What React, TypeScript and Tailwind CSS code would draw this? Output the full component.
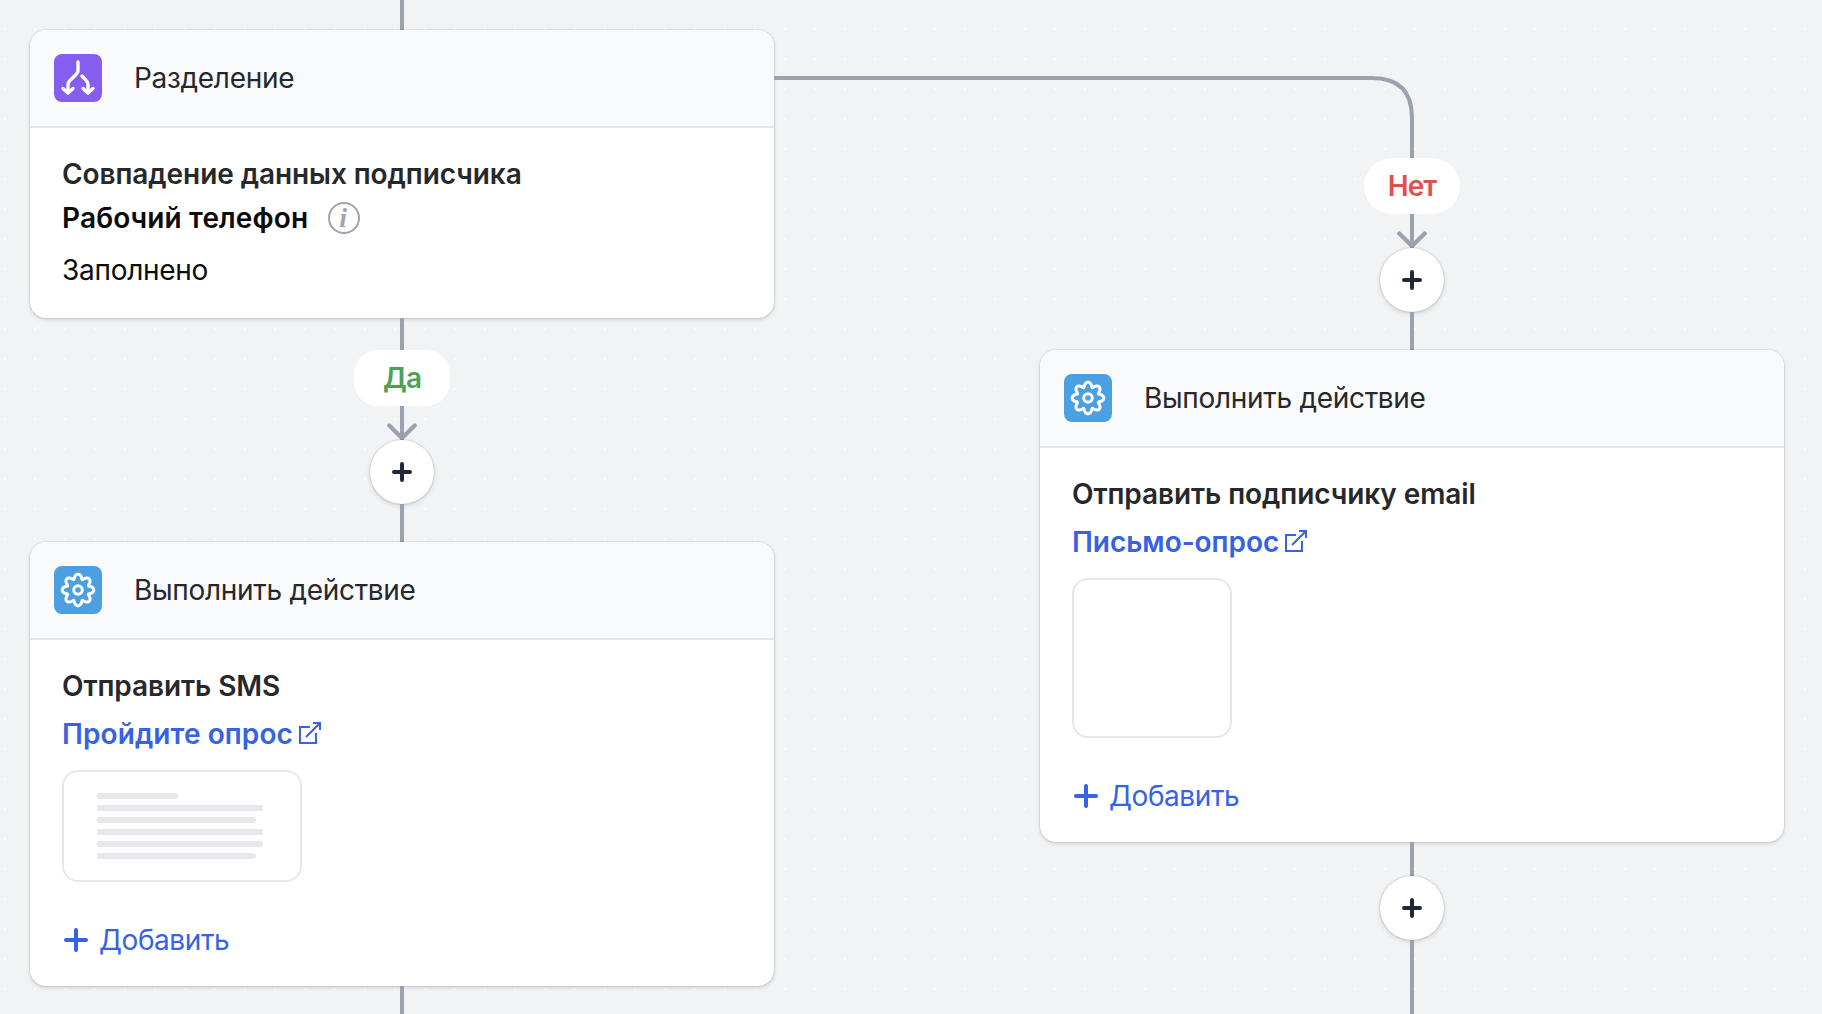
import type { ReactNode } from "react";

function Line({ className }: { className: string }) {
  return <div className={`w-1 shrink-0 bg-[#9ca1ae] ${className}`} />;
}

function Arrow() {
  return (
    <svg className="-mt-[17px] h-[17px] w-8 shrink-0" viewBox="0 0 32 17" fill="none" stroke="#9ca1ae" strokeWidth="4.300" strokeLinecap="round" strokeLinejoin="round">
      <path d="M3.300 2.500 16 15 28.700 2.500" />
    </svg>
  );
}

function Pill({ children, className }: { children: ReactNode; className: string }) {
  return (
    <div className={`flex h-14 w-24 shrink-0 items-center justify-center bg-white text-[28px] leading-10 font-[560] tracking-[-0.9px] ${className}`}>
      {children}
    </div>
  );
}

function PlusButton() {
  return (
    <button className="flex size-16 shrink-0 items-center justify-center rounded-full bg-white shadow-[0_0_2px_rgba(0,0,0,0.25),0_2px_5px_rgba(0,0,0,0.13)]">
      <svg className="size-5" viewBox="0 0 20 20" stroke="#1f2937" strokeWidth="4" strokeLinecap="round">
        <path d="M10 2v16M2 10h16" />
      </svg>
    </button>
  );
}

function SplitIcon() {
  return (
    <div className="size-12 rounded-lg bg-[#845eee]">
      <svg className="size-12" viewBox="0 0 48 48" fill="none" stroke="white" strokeWidth="3.400" strokeLinecap="round" strokeLinejoin="round">
        <path d="M24 8v8.500c0 1.500-.5 2.500-1.500 3.500l-7 7c-1 1-1.500 2-1.500 3.500V38.500" />
        <path d="M9 34.500l5 4.500 5-4.500" />
        <path d="M28 22l4.500 4.800c1 1.100 1.500 2.200 1.500 3.700V38.500" />
        <path d="M29 34.500l5 4.500 5-4.500" />
      </svg>
    </div>
  );
}

function gearPath() {
  let d = "";
  for (let i = 0; i <= 240; i++) {
    const a = (i / 240) * Math.PI * 2;
    const r = 13.5 + 2.3 * Math.cos(8 * a);
    const t = a + 0.05 * Math.sin(8 * a);
    d += `${i ? "L" : "M"}${(24 + r * Math.cos(t)).toFixed(2)} ${(24 + r * Math.sin(t)).toFixed(2)}`;
  }
  return d + "Z";
}

function GearIcon() {
  return (
    <div className="size-12 rounded-lg bg-[#4ca0e2]">
      <svg className="size-12" viewBox="0 0 48 48" fill="none" stroke="white" strokeWidth="3" strokeLinejoin="round">
        <path d={gearPath()} />
        <circle cx="24" cy="24" r="4.300" />
      </svg>
    </div>
  );
}

function Card({ icon, title, className, children }: { icon: ReactNode; title: string; className: string; children: ReactNode }) {
  return (
    <section className={`flex w-full shrink-0 flex-col overflow-hidden rounded-2xl bg-white shadow-[0_0_2px_rgba(0,0,0,0.25),0_2px_4px_rgba(0,0,0,0.12)] ${className}`}>
      <header className="flex h-[98px] shrink-0 items-center gap-8 border-b-2 border-[#e5e6e8] bg-[#f9fafc] px-6">
        {icon}
        <h2 className="text-[28px] leading-10 tracking-[-0.3px] text-[#27282b]">{title}</h2>
      </header>
      <div className="flex flex-1 flex-col px-8 pt-[26px] text-[28px] leading-10 text-[#0c0c0d]">{children}</div>
    </section>
  );
}

function Heading({ children }: { children: ReactNode }) {
  return <h3 className="font-semibold tracking-[-0.08px] whitespace-nowrap text-[#27282b]">{children}</h3>;
}

function TemplateLink({ children, className }: { children: ReactNode; className: string }) {
  return (
    <a className={`mt-2 flex gap-[5px] font-semibold text-[#3662e3] ${className}`}>
      <span>{children}</span>
      <svg className="mt-[7px] size-6" viewBox="0 0 24 24" fill="none" stroke="currentColor" strokeWidth="2">
        <path d="M12 6H2v16h16V12M15 2h7v7M22 2 8 16" />
      </svg>
    </a>
  );
}

function AddButton() {
  return (
    <button className="mt-[38px] flex items-center gap-2.5 self-start pl-[1px] text-[#3662e3]">
      <svg className="size-[26px]" viewBox="0 0 26 26" stroke="currentColor" strokeWidth="4" strokeLinecap="round">
        <path d="M13 3v20M3 13h20" />
      </svg>
      <span className="tracking-[-0.42px]">Добавить</span>
    </button>
  );
}

const previewLines = ["w-[81px]", "w-[166px]", "w-[159px]", "w-[166px]", "w-[166px]", "w-[159px]"];

export default function App() {
  return (
    <main className="relative flex h-[1014px] w-[1822px] gap-[266px] overflow-hidden bg-[#f2f3f5] bg-[radial-gradient(circle_at_1px_1px,rgba(255,255,255,0.65)_1px,transparent_1.200px)] bg-[length:30px_30px] bg-[position:4px_28px] pl-[30px] font-['Inter',sans-serif]">
      <div className="flex w-[744px] flex-col items-center">
        <Line className="h-[30px]" />
        <Card icon={<SplitIcon />} title="Разделение" className="h-[288px]">
          <Heading>Совпадение данных подписчика</Heading>
          <div className="mt-1 flex items-center gap-5">
            <span className="font-semibold tracking-[0.12px]">Рабочий телефон</span>
            <span className="flex size-8 items-center justify-center rounded-full border-2 border-[#a1a3ab] pr-0.5 font-['Liberation_Serif',serif] text-[28px] leading-7 font-bold text-[#a1a3ab] italic">i</span>
          </div>
          <p className="mt-3 tracking-[-0.28px]">Заполнено</p>
        </Card>
        <Line className="h-8" />
        <Pill className="rounded-3xl text-[#4aa352]">Да</Pill>
        <Line className="h-[34px]" />
        <Arrow />
        <PlusButton />
        <Line className="h-[38px]" />
        <Card icon={<GearIcon />} title="Выполнить действие" className="h-[444px]">
          <Heading>Отправить SMS</Heading>
          <TemplateLink className="tracking-[0.09px]">Пройдите опрос</TemplateLink>
          <div className="mt-4 flex h-28 w-60 flex-col gap-[6.1px] rounded-2xl border-2 border-[#e5e7eb] pt-[21px] pl-[33px]">
            {previewLines.map((w, i) => (
              <div key={i} className={`h-[6px] shrink-0 rounded-full bg-[#e5e7eb] ${w}`} />
            ))}
          </div>
          <AddButton />
        </Card>
        <Line className="h-[28px]" />
      </div>
      <svg className="absolute top-[70px] left-[774px] h-[88px] w-[642px]" viewBox="0 0 642 88" fill="none" stroke="#9ca1ae" strokeWidth="4">
        <path d="M0 8H598Q638 8 638 48V88" />
      </svg>
      <div className="flex w-[744px] flex-col items-center pt-[158px]">
        <Pill className="rounded-full text-[#dd524c]">Нет</Pill>
        <Line className="h-[34px]" />
        <Arrow />
        <PlusButton />
        <Line className="h-[38px]" />
        <Card icon={<GearIcon />} title="Выполнить действие" className="h-[492px]">
          <Heading>Отправить подписчику email</Heading>
          <TemplateLink className="tracking-[-0.05px]">Письмо-опрос</TemplateLink>
          <div className="mt-4 size-40 shrink-0 rounded-2xl border-2 border-[#e5e7eb]" />
          <AddButton />
        </Card>
        <Line className="h-[34px]" />
        <PlusButton />
        <Line className="h-[74px]" />
      </div>
    </main>
  );
}
